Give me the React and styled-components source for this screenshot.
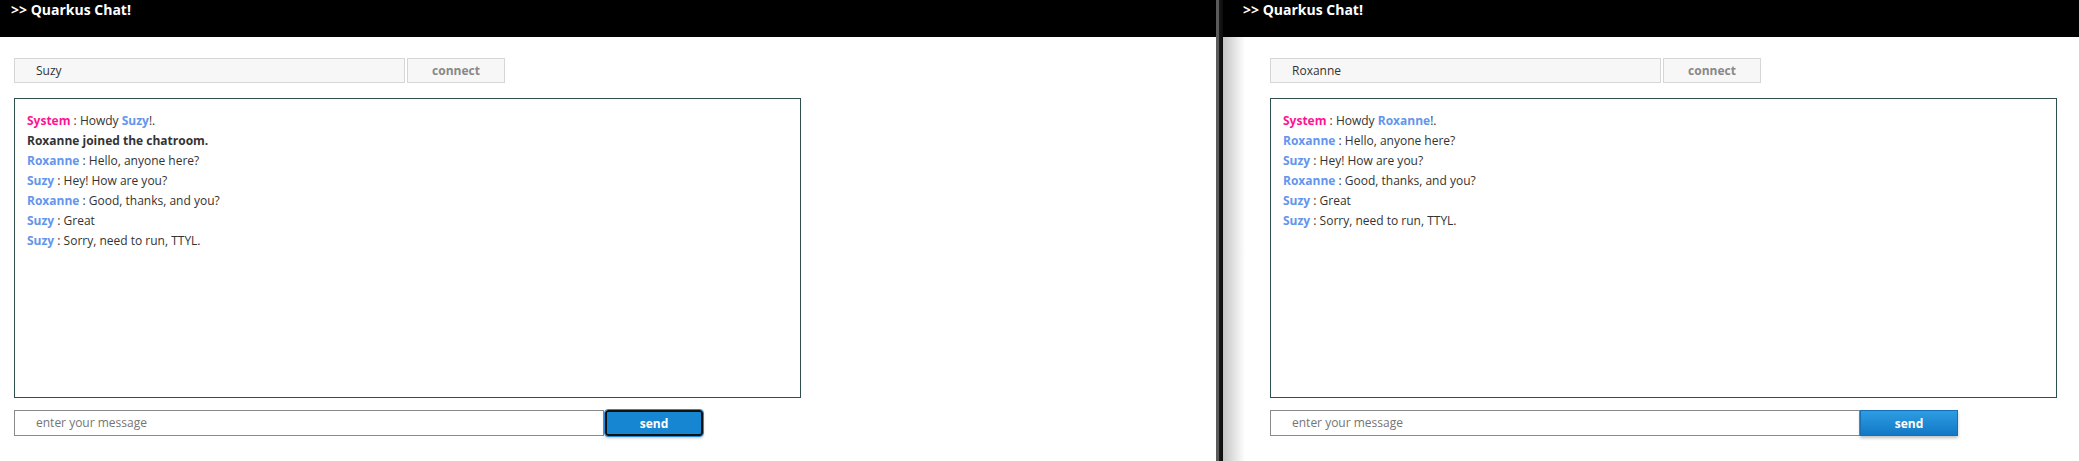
import React from "react";
import styled, { createGlobalStyle } from "styled-components";

const GlobalStyle = createGlobalStyle`
  html, body {
    margin: 0;
    padding: 0;
    background: #fff;
  }
  body {
    font-family: "Open Sans", "Liberation Sans", sans-serif;
    font-size: 12px;
    color: #333;
  }
`;

const Desktop = styled.div`
  display: flex;
  height: 461px;
  overflow: hidden;
`;

const Window = styled.div`
  position: relative;
  display: flex;
  flex-direction: column;
  width: ${(p) => (p.$width ? `${p.$width}px` : "auto")};
  flex: ${(p) => (p.$width ? "none" : "1")};
  background: #fff;
  ${(p) =>
    p.$shadow &&
    `
    &::after {
      content: "";
      position: absolute;
      left: 0;
      top: 37px;
      bottom: 0;
      width: 22px;
      background: linear-gradient(to right, #c4c4c4, rgba(255,255,255,0));
      pointer-events: none;
    }
  `}
`;

const Divider = styled.div`
  width: 7px;
  flex: none;
  background: linear-gradient(to right, #5a5a5a 0, #5a5a5a 3px, #1a1a1a 3px, #0c0c0c 7px);
`;

const Header = styled.div`
  height: 37px;
  background: #000;
  color: #fff;
  padding-left: ${(p) => p.$inset}px;
  font-weight: 700;
  font-size: 14px;
  line-height: 20px;
`;

const Content = styled.div`
  padding: 21px 0 0 ${(p) => p.$inset}px;
`;

const Row = styled.div`
  display: flex;
  align-items: stretch;
`;

const NameInput = styled.div`
  box-sizing: border-box;
  width: 391px;
  height: 25px;
  margin-right: 2px;
  padding-left: 21px;
  background: #f7f7f7;
  border: 1px solid #d6d6d6;
  color: #333;
  line-height: 23px;
`;

const ConnectButton = styled.button`
  box-sizing: border-box;
  width: 98px;
  height: 25px;
  background: #f7f7f7;
  border: 1px solid #d6d6d6;
  color: #888;
  font-family: inherit;
  font-size: 12px;
  font-weight: 700;
  padding: 0;
`;

const ChatBox = styled.div`
  box-sizing: border-box;
  width: 787px;
  height: 300px;
  margin: 15px 0 12px;
  padding: 12px 12px;
  border: 1px solid darkslategray;
  line-height: 20px;
`;

const Line = styled.div`
  font-weight: ${(p) => (p.$bold ? 700 : 400)};
  white-space: nowrap;
`;

const Name = styled.span`
  font-weight: 700;
  color: ${(p) => (p.$system ? "#ff1493" : "#6495ed")};
`;

const MessageInput = styled.div`
  box-sizing: border-box;
  width: 590px;
  height: 26px;
  padding-left: 21px;
  border: 1px solid #8a8a8a;
  background: #fff;
  color: #757575;
  line-height: 24px;
`;

const SendButton = styled.button`
  box-sizing: border-box;
  width: 98px;
  height: 26px;
  margin-left: ${(p) => (p.$focused ? "1px" : "0")};
  padding: 0;
  color: #fff;
  font-family: inherit;
  font-size: 12px;
  font-weight: 700;
  border: 1px solid #1670b8;
  background: linear-gradient(to bottom, #2d9de2, #1378c6);
  box-shadow: 0 2px 3px rgba(0, 0, 0, 0.25);
  ${(p) =>
    p.$focused &&
    `
    background: #1686d2;
    border: 2px solid #111;
    border-radius: 3px;
    outline: 1px solid #2a8ad8;
  `}
`;

const chats = {
  Suzy: [
    { who: "System", text: "Howdy ", target: "Suzy" },
    { joined: "Roxanne joined the chatroom." },
    { who: "Roxanne", text: "Hello, anyone here?" },
    { who: "Suzy", text: "Hey! How are you?" },
    { who: "Roxanne", text: "Good, thanks, and you?" },
    { who: "Suzy", text: "Great" },
    { who: "Suzy", text: "Sorry, need to run, TTYL." },
  ],
  Roxanne: [
    { who: "System", text: "Howdy ", target: "Roxanne" },
    { who: "Roxanne", text: "Hello, anyone here?" },
    { who: "Suzy", text: "Hey! How are you?" },
    { who: "Roxanne", text: "Good, thanks, and you?" },
    { who: "Suzy", text: "Great" },
    { who: "Suzy", text: "Sorry, need to run, TTYL." },
  ],
};

const ChatWindow = ({ user, width, titleInset, contentInset, shadow, focused }) => (
  <Window $width={width} $shadow={shadow}>
    <Header $inset={titleInset}>&gt;&gt; Quarkus Chat!</Header>
    <Content $inset={contentInset}>
      <Row>
        <NameInput>{user}</NameInput>
        <ConnectButton>connect</ConnectButton>
      </Row>
      <ChatBox>
        {chats[user].map((m, i) =>
          m.joined ? (
            <Line key={i} $bold>
              {m.joined}
            </Line>
          ) : (
            <Line key={i}>
              <Name $system={m.who === "System"}>{m.who}</Name> : {m.text}
              {m.target && (
                <>
                  <Name>{m.target}</Name>!.
                </>
              )}
            </Line>
          )
        )}
      </ChatBox>
      <Row>
        <MessageInput>enter your message</MessageInput>
        <SendButton $focused={focused}>send</SendButton>
      </Row>
    </Content>
  </Window>
);

const App = () => (
  <>
    <GlobalStyle />
    <Desktop>
      <ChatWindow user="Suzy" width={1216} titleInset={11} contentInset={14} focused />
      <Divider />
      <ChatWindow user="Roxanne" titleInset={20} contentInset={47} shadow />
    </Desktop>
  </>
);

export default App;
